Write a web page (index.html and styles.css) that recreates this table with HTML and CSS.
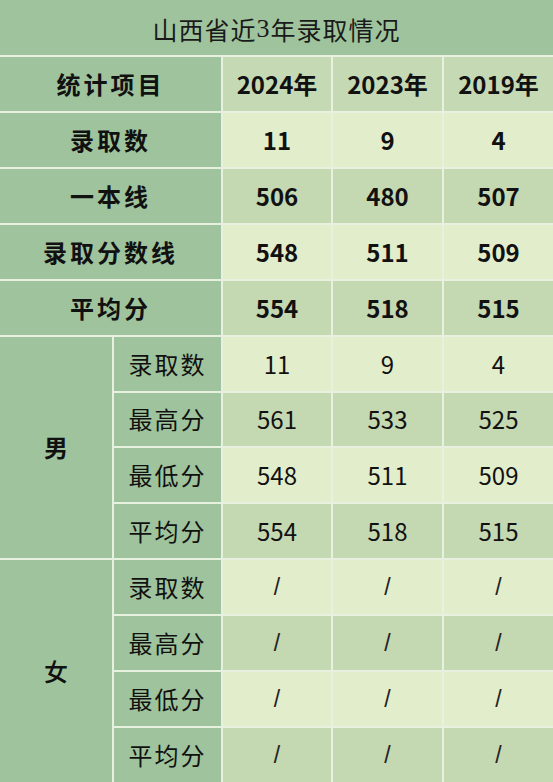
FILE: index.html
```html
<!DOCTYPE html>
<html lang="zh-CN">
<head>
<meta charset="utf-8">
<title>山西省近3年录取情况</title>
<link rel="stylesheet" href="styles.css">
</head>
<body>
<div class="table">
  <div class="cell title span-all">山西省近<span class="serif">3</span>年录取情况</div>

  <div class="cell dark bold span-2">统计项目</div>
  <div class="cell head bold">2024年</div>
  <div class="cell head bold">2023年</div>
  <div class="cell head bold">2019年</div>

  <div class="cell dark bold span-2">录取数</div>
  <div class="cell light bold">11</div>
  <div class="cell light bold">9</div>
  <div class="cell light bold">4</div>

  <div class="cell dark bold span-2">一本线</div>
  <div class="cell mid bold">506</div>
  <div class="cell mid bold">480</div>
  <div class="cell mid bold">507</div>

  <div class="cell dark bold span-2">录取分数线</div>
  <div class="cell light bold">548</div>
  <div class="cell light bold">511</div>
  <div class="cell light bold">509</div>

  <div class="cell dark bold span-2">平均分</div>
  <div class="cell mid bold">554</div>
  <div class="cell mid bold">518</div>
  <div class="cell mid bold">515</div>

  <div class="cell dark gender bold male">男</div>
  <div class="cell dark sub">录取数</div>
  <div class="cell light">11</div>
  <div class="cell light">9</div>
  <div class="cell light">4</div>

  <div class="cell dark sub">最高分</div>
  <div class="cell mid">561</div>
  <div class="cell mid">533</div>
  <div class="cell mid">525</div>

  <div class="cell dark sub">最低分</div>
  <div class="cell light">548</div>
  <div class="cell light">511</div>
  <div class="cell light">509</div>

  <div class="cell dark sub">平均分</div>
  <div class="cell mid">554</div>
  <div class="cell mid">518</div>
  <div class="cell mid">515</div>

  <div class="cell dark gender female">女</div>
  <div class="cell dark sub">录取数</div>
  <div class="cell light slash">/</div>
  <div class="cell light slash">/</div>
  <div class="cell light slash">/</div>

  <div class="cell dark sub">最高分</div>
  <div class="cell mid slash">/</div>
  <div class="cell mid slash">/</div>
  <div class="cell mid slash">/</div>

  <div class="cell dark sub">最低分</div>
  <div class="cell light slash">/</div>
  <div class="cell light slash">/</div>
  <div class="cell light slash">/</div>

  <div class="cell dark sub">平均分</div>
  <div class="cell mid slash">/</div>
  <div class="cell mid slash">/</div>
  <div class="cell mid slash">/</div>
</div>
</body>
</html>
```

FILE: styles.css
```css
html, body {
  margin: 0;
  padding: 0;
  background: #9fc49d;
}

.table {
  width: 553px;
  height: 782px;
  display: grid;
  grid-template-columns: 112px 107px 108px 109px 1fr;
  grid-template-rows: 55px repeat(13, 1fr);
  gap: 2px;
  background: #e8f0e0;
  font-family: "Noto Sans CJK SC", "Noto Sans", sans-serif;
  color: #111;
  font-size: 24px;
}

.cell {
  display: flex;
  align-items: center;
  justify-content: center;
  line-height: 1;
}

.title {
  background: #9fc49d;
  font-weight: 400;
  font-size: 25px;
  letter-spacing: 1px;
  color: #1a1a1a;
  padding-top: 3px;
}

.serif {
  font-family: "Liberation Serif", serif;
  font-size: 26px;
}

.span-all { grid-column: 1 / -1; }
.span-2 { grid-column: span 2; letter-spacing: 3px; }

.dark { background: #9fc49d; }
.head { background: #c5d9b4; }
.light { background: #e2edcb; }
.mid { background: #c4d8b2; }

.bold { font-weight: 700; }

.sub {
  letter-spacing: 2px;
  font-weight: 400;
}

.gender {
  grid-column: 1;
}
.male { grid-row: 7 / span 4; }
.female { grid-row: 11 / span 4; font-weight: 500; }

.slash {
  font-family: "Liberation Sans", sans-serif;
  font-weight: 400;
  font-size: 23px;
  color: #222;
}
```
